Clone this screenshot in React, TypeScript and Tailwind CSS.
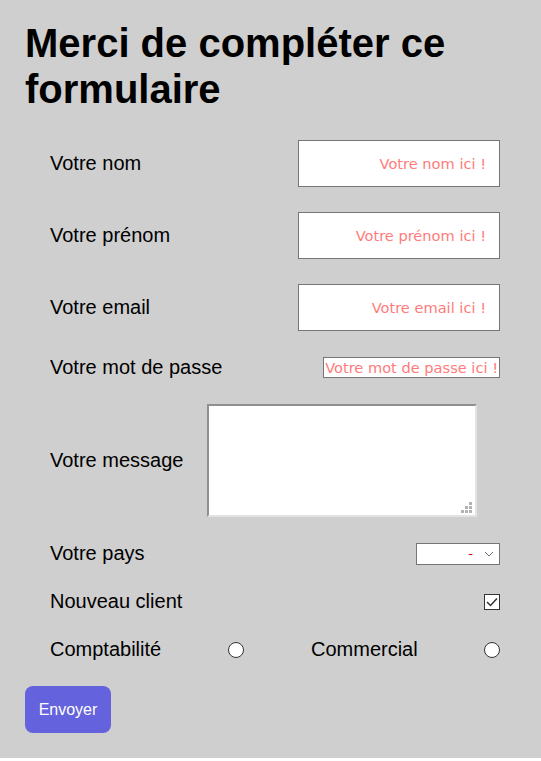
import React from 'react';

const Row: React.FC<{ label: string; children: React.ReactNode; className?: string }> = ({ label, children, className }) => (
  <div className={`flex items-center justify-between ${className ?? ''}`}>
    <label className="text-[20px] leading-[23px] text-black">{label}</label>
    {children}
  </div>
);

const inputCls =
  "w-[202px] h-[47px] border border-[#767676] bg-white pr-[13px] text-right font-['DejaVu_Sans'] text-[14.6px] outline-none placeholder:text-[#ff7b7b]";

export default function App() {
  return (
    <div className="min-h-[758px] bg-[#cfcfcf] px-[25px] pt-[20px] pb-[25px] font-['Liberation_Sans',Arial,sans-serif]">
      <h1 className="text-[40px] font-bold leading-[46px] text-black">Merci de compléter ce formulaire</h1>

      <form className="mt-[28px] flex w-[450px] flex-col gap-[25px] ml-[25px]">
        <Row label="Votre nom">
          <input type="text" placeholder="Votre nom ici !" className={inputCls} />
        </Row>
        <Row label="Votre prénom">
          <input type="text" placeholder="Votre prénom ici !" className={inputCls} />
        </Row>
        <Row label="Votre email">
          <input type="email" placeholder="Votre email ici !" className={inputCls} />
        </Row>
        <Row label="Votre mot de passe">
          <input
            type="password"
            placeholder="Votre mot de passe ici !"
            className="w-[177px] h-[21px] border border-[#767676] bg-white px-[1px] text-right font-['DejaVu_Sans'] text-[14.6px] leading-[17px] outline-none placeholder:text-[#ff7b7b]"
          />
        </Row>

        <div className="flex items-center gap-[24px]">
          <label className="text-[20px] leading-[23px] text-black">Votre message</label>
          <div className="relative">
            <textarea className="block w-[270px] h-[113px] resize-none border-2 border-t-[#8f8f8f] border-l-[#8f8f8f] border-r-[#e3e3e3] border-b-[#e3e3e3] bg-white outline-none" />
            <svg className="absolute right-[5px] bottom-[4px]" width="11" height="11" viewBox="0 0 11 11">
              <rect x="8" y="0" width="3" height="3" fill="#b3b3b3" />
              <rect x="4" y="4" width="3" height="3" fill="#b3b3b3" />
              <rect x="8" y="4" width="3" height="3" fill="#b3b3b3" />
              <rect x="0" y="8" width="3" height="3" fill="#b3b3b3" />
              <rect x="4" y="8" width="3" height="3" fill="#b3b3b3" />
              <rect x="8" y="8" width="3" height="3" fill="#b3b3b3" />
            </svg>
          </div>
        </div>

        <Row label="Votre pays">
          <div className="relative">
            <select className="block w-[84px] h-[22px] appearance-none border border-[#767676] bg-white pr-[26px] text-right font-['DejaVu_Sans'] text-[13px] text-[#e00000] outline-none">
              <option>-</option>
            </select>
            <svg className="absolute right-[6px] top-[8px]" width="10" height="6" viewBox="0 0 10 6" fill="none">
              <path d="M1 1l4 4 4-4" stroke="#6b6b6b" strokeWidth="1" />
            </svg>
          </div>
        </Row>

        <Row label="Nouveau client">
          <span className="flex h-[16px] w-[16px] items-center justify-center border border-[#333] bg-white">
            <svg width="12" height="10" viewBox="0 0 12 10" fill="none">
              <path d="M1 5l3.5 3.5L11 1.5" stroke="#333" strokeWidth="1.5" />
            </svg>
          </span>
        </Row>

        <div className="flex items-center justify-between">
          <div className="flex w-[194px] items-center justify-between">
            <label className="text-[20px] leading-[23px] text-black">Comptabilité</label>
            <span className="block h-[16px] w-[16px] rounded-full border border-[#333] bg-white" />
          </div>
          <div className="flex w-[189px] items-center justify-between">
            <label className="text-[20px] leading-[23px] text-black">Commercial</label>
            <span className="block h-[16px] w-[16px] rounded-full border border-[#333] bg-white" />
          </div>
        </div>
      </form>

      <button
        type="button"
        className="mt-[25px] h-[47px] w-[86px] rounded-[8px] bg-[#6462dc] text-[16px] text-white"
      >
        Envoyer
      </button>
    </div>
  );
}
